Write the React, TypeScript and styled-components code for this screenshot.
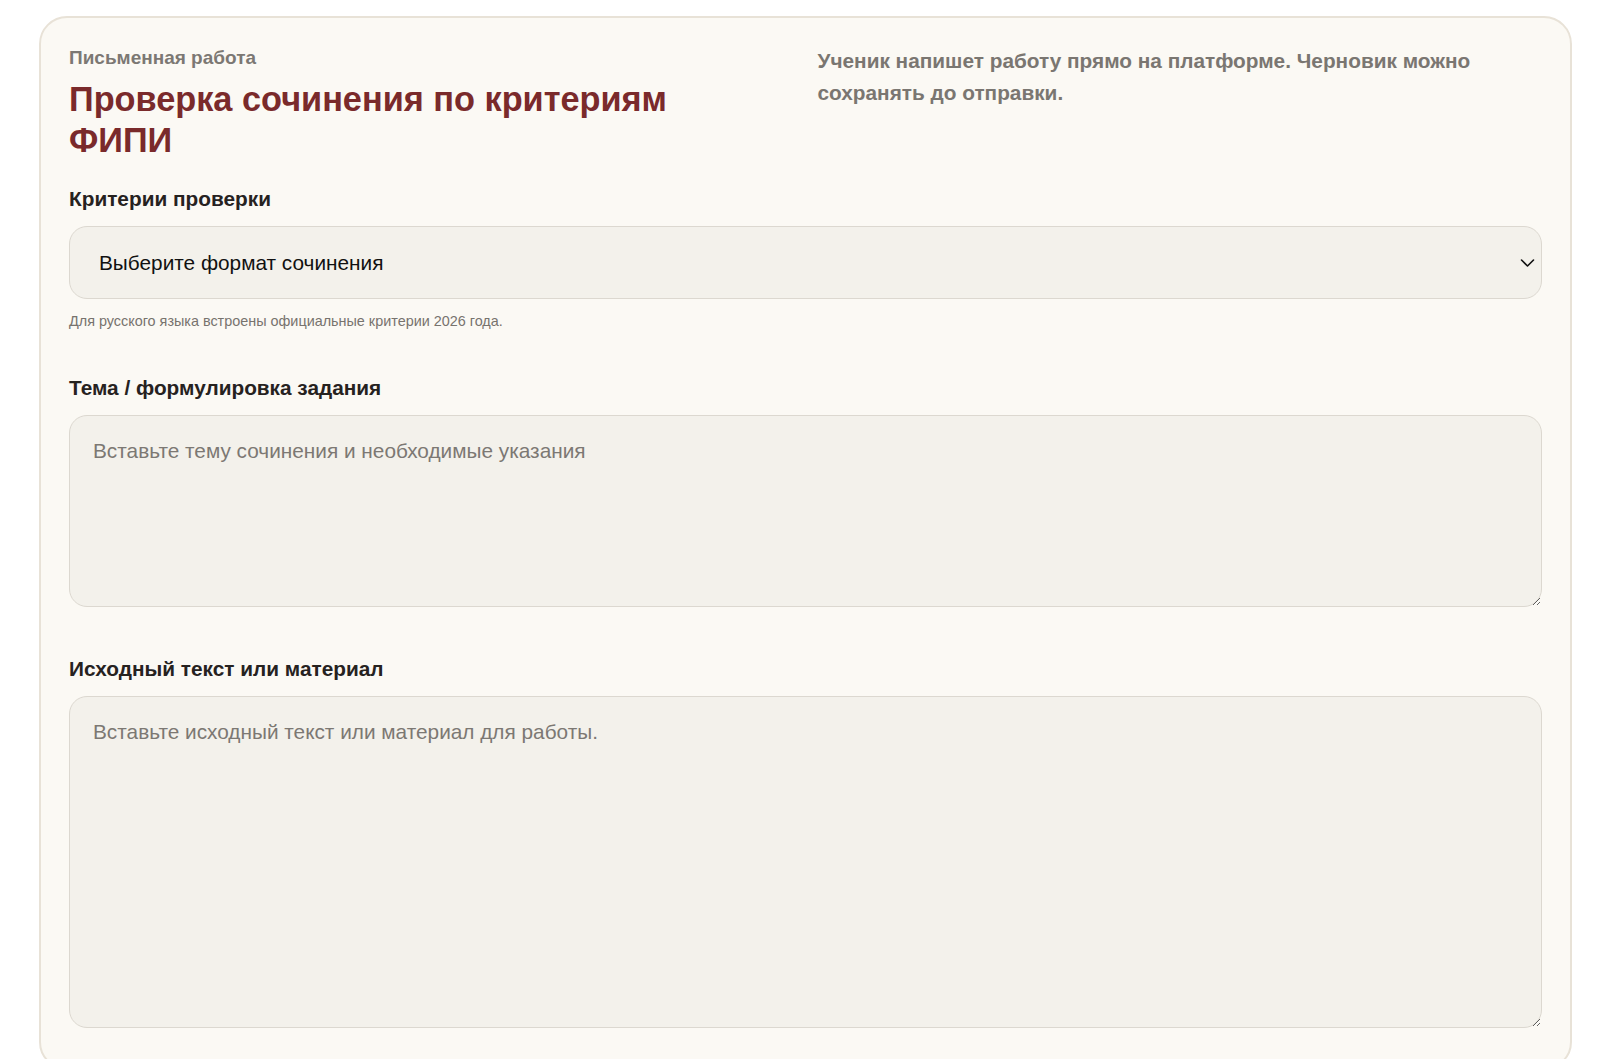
import React from "react";
import styled, { createGlobalStyle } from "styled-components";

const GlobalStyle = createGlobalStyle`
  * { box-sizing: border-box; }
  html, body { margin: 0; padding: 0; background: #ffffff; }
  body { font-family: "Liberation Sans", Arial, Helvetica, sans-serif; }
`;

const Page = styled.div`
  padding: 16px 28px 0 39px;
`;

const Card = styled.section`
  background: #fbf9f4;
  border: 2px solid #e8e2d7;
  border-radius: 28px;
  padding: 29px 28px 40px 28px;
`;

const Header = styled.header`
  display: grid;
  grid-template-columns: 1fr 1fr;
  column-gap: 24px;
  align-items: start;
`;

const TitleBlock = styled.div`
  display: flex;
  flex-direction: column;
  gap: 10px;
`;

const Eyebrow = styled.div`
  font-size: 19px;
  line-height: 22px;
  font-weight: 700;
  color: #7c7873;
`;

const Title = styled.h1`
  margin: 0;
  font-size: 34.3px;
  line-height: 41px;
  font-weight: 700;
  color: #7a2a2b;
  max-width: 640px;
`;

const Lead = styled.p`
  margin: -2px 0 0 0;
  font-size: 20.8px;
  line-height: 32px;
  font-weight: 700;
  color: #7a7671;
`;

const Form = styled.div`
  display: flex;
  flex-direction: column;
  gap: 50px;
  margin-top: 26px;
`;

const Field = styled.div`
  display: flex;
  flex-direction: column;
  gap: 15px;
`;

const Label = styled.label`
  font-size: 20.8px;
  line-height: 24px;
  font-weight: 700;
  color: #26221f;
`;

const SelectWrap = styled.div`
  position: relative;
`;

const Select = styled.select`
  display: block;
  width: 100%;
  height: 73px;
  appearance: none;
  -webkit-appearance: none;
  background: #f3f1eb;
  border: 1.5px solid #dcd8d0;
  border-radius: 18px;
  padding: 0 50px 0 29px;
  font-family: "Liberation Sans", Arial, sans-serif;
  font-size: 20.8px;
  color: #111111;
  outline: none;
`;

const Chevron = styled.svg`
  position: absolute;
  right: 7px;
  top: 50%;
  width: 15px;
  height: 9px;
  transform: translateY(-50%);
  pointer-events: none;
`;

const Hint = styled.div`
  margin: -2px 0 -4px 0;
  font-size: 14.4px;
  line-height: 18px;
  color: #77736e;
`;

const TextArea = styled.textarea<{ $height: number }>`
  display: block;
  width: 100%;
  height: ${(p) => p.$height}px;
  background: #f3f1eb;
  border: 1.5px solid #dcd8d0;
  border-radius: 18px;
  padding: 22px 23px;
  font-family: "Liberation Sans", Arial, sans-serif;
  font-size: 20.8px;
  line-height: 25px;
  color: #222;
  outline: none;
  resize: vertical;

  &::placeholder {
    color: #7c7873;
  }
`;

export default function App() {
  return (
    <>
      <GlobalStyle />
      <Page>
        <Card>
          <Header>
            <TitleBlock>
              <Eyebrow>Письменная работа</Eyebrow>
              <Title>Проверка сочинения по критериям ФИПИ</Title>
            </TitleBlock>
            <Lead>
              Ученик напишет работу прямо на платформе. Черновик можно
              сохранять до отправки.
            </Lead>
          </Header>
          <Form>
            <Field>
              <Label htmlFor="criteria">Критерии проверки</Label>
              <SelectWrap>
                <Select id="criteria" defaultValue="">
                  <option value="">Выберите формат сочинения</option>
                  <option value="oge">ОГЭ</option>
                  <option value="ege">ЕГЭ</option>
                </Select>
                <Chevron viewBox="0 0 15 9">
                  <path d="M1.5 1.5 L7.5 7.5 L13.5 1.5" fill="none" stroke="#111" strokeWidth="1.6" strokeLinecap="round" strokeLinejoin="round" />
                </Chevron>
              </SelectWrap>
              <Hint>Для русского языка встроены официальные критерии 2026 года.</Hint>
            </Field>
            <Field>
              <Label htmlFor="topic">Тема / формулировка задания</Label>
              <TextArea
                id="topic"
                $height={192}
                placeholder="Вставьте тему сочинения и необходимые указания"
              />
            </Field>
            <Field>
              <Label htmlFor="source">Исходный текст или материал</Label>
              <TextArea
                id="source"
                $height={332}
                placeholder="Вставьте исходный текст или материал для работы."
              />
            </Field>
          </Form>
        </Card>
      </Page>
    </>
  );
}
